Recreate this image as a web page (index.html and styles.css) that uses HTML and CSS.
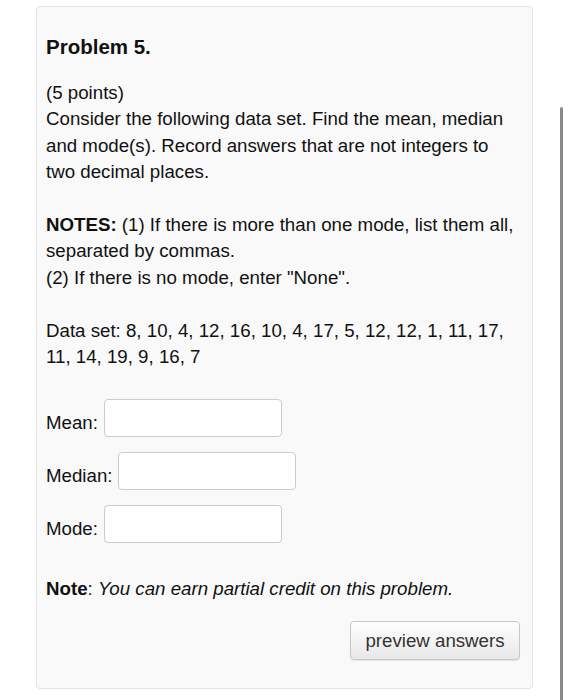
FILE: index.html
```html
<!DOCTYPE html>
<html lang="en">
<head>
    <meta charset="UTF-8">
    <meta name="viewport" content="width=device-width, initial-scale=1.0">
    <title>Problem 5</title>
    <link rel="stylesheet" href="styles.css">
</head>
<body>
    <div class="problem">
        <h3 class="title">Problem 5.</h3>
        <!-- 题目 -->
        <p>(5 points)<br>Consider the following data set. Find the mean, median and mode(s). Record answers that are not integers to two decimal places.</p>
        <p><b>NOTES:</b> (1) If there is more than one mode, list them all, separated by commas.<br>(2) If there is no mode, enter "None".</p>
        <p>Data set: 8, 10, 4, 12, 16, 10, 4, 17, 5, 12, 12, 1, 11, 17, 11, 14, 19, 9, 16, 7</p>
        <!-- 答案 -->
        <div class="answers">
            <div class="row"><label for="mean">Mean:</label><input type="text" id="mean"></div>
            <div class="row"><label for="median">Median:</label><input type="text" id="median"></div>
            <div class="row"><label for="mode">Mode:</label><input type="text" id="mode"></div>
        </div>
        <p class="note"><b>Note</b>: <i>You can earn partial credit on this problem.</i></p>
        <div class="btns">
            <button type="button">preview answers</button>
        </div>
    </div>
    <div class="scrollbar"></div>
</body>
</html>
```
FILE: styles.css
```css
*{
    padding: 0;
    margin: 0;
    box-sizing: border-box;
}
body{
    background: #fff;
    font-family: "Liberation Sans", Arial, sans-serif;
    font-size: 18.7px;
    line-height: 26.4px;
    color: #111;
    position: relative;
    height: 700px;
    overflow: hidden;
}
.problem{
    width: 497px;
    margin: 6px 0 0 36px;
    padding: 27px 12px 28px 9px;
    background: #f9f9f9;
    border: 1px solid #e3e3e3;
    border-radius: 4px;
}
.title{
    font-size: 20.5px;
    line-height: 26px;
    margin-bottom: 20px;
}
p{
    margin-bottom: 26.4px;
}
.answers{
    padding-top: 2px;
}
.row{
    display: flex;
    align-items: flex-end;
    margin-bottom: 15px;
}
.row label{
    margin-right: 6px;
}
.row input{
    width: 178px;
    height: 38px;
    border: 1px solid #ccc;
    border-radius: 4px;
    background: #fff;
    font-size: 17px;
}
.note{
    margin-top: 33px;
    margin-bottom: 19px;
}
.btns{
    display: flex;
    justify-content: flex-end;
}
.btns button{
    width: 170px;
    height: 39px;
    font-family: "Liberation Sans", Arial, sans-serif;
    font-size: 18.7px;
    color: #333;
    border: 1px solid #c8c8c8;
    border-radius: 4px;
    background: linear-gradient(#fefefe, #e8e8e8);
    box-shadow: 0 1px 1px rgba(0,0,0,0.08);
}
.scrollbar{
    position: absolute;
    left: 560px;
    top: 107px;
    width: 3px;
    height: 600px;
    background: #8a8a8a;
    border-radius: 2px;
}
```
